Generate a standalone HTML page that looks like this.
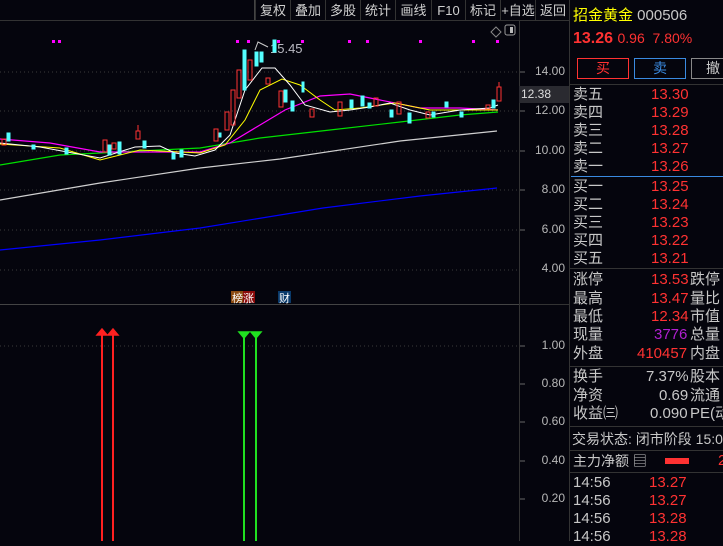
<!DOCTYPE html>
<html><head><meta charset="utf-8"><style>
*{margin:0;padding:0;box-sizing:border-box}
body{width:723px;height:541px;background:#05050d;overflow:hidden;position:relative;font-family:"Liberation Sans","Noto Sans CJK SC",sans-serif;color:#c8c8c8}
.a{position:absolute;white-space:nowrap}
.tb{position:absolute;top:0;height:21px;font-size:13px;line-height:21px;color:#d0d0d0;text-align:center;border-left:1px solid #333}
.ax{position:absolute;right:158px;font-size:12px;color:#b8b8b8;text-align:right}
.p{position:absolute;left:573px;font-size:15px;line-height:18px;white-space:nowrap}
.r{color:#ff3232}
</style></head><body>
<div class="a" style="left:254px;top:0;width:2px;height:21px;background:#444"></div>
<div class="tb" style="left:255px;width:35px">复权</div>
<div class="tb" style="left:290px;width:35px">叠加</div>
<div class="tb" style="left:325px;width:35px">多股</div>
<div class="tb" style="left:360px;width:35px">统计</div>
<div class="tb" style="left:395px;width:36px">画线</div>
<div class="tb" style="left:431px;width:34px">F10</div>
<div class="tb" style="left:465px;width:35px">标记</div>
<div class="tb" style="left:500px;width:35px">+自选</div>
<div class="tb" style="left:535px;width:35px">返回</div>
<div class="a" style="left:0;top:20px;width:569px;height:1px;background:#333"></div>
<div class="a" style="left:519px;top:20px;width:1px;height:521px;background:#333"></div>
<div class="a" style="left:569px;top:0;width:1px;height:541px;background:#333"></div>
<div class="a" style="left:0;top:304px;width:520px;height:1px;background:#444"></div>
<svg class="a" style="left:0;top:0" width="569" height="541">
<g stroke="#3a3a3a" stroke-dasharray="1,3">
<line x1="0" y1="72" x2="520" y2="72"/><line x1="0" y1="111" x2="520" y2="111"/><line x1="0" y1="151" x2="520" y2="151"/><line x1="0" y1="190" x2="520" y2="190"/><line x1="0" y1="230" x2="520" y2="230"/><line x1="0" y1="270" x2="520" y2="270"/><line x1="0" y1="346" x2="520" y2="346"/>
</g>
<g stroke="#666"><line x1="520" y1="72" x2="525" y2="72"/><line x1="520" y1="111" x2="525" y2="111"/><line x1="520" y1="151" x2="525" y2="151"/><line x1="520" y1="190" x2="525" y2="190"/><line x1="520" y1="230" x2="525" y2="230"/><line x1="520" y1="346" x2="525" y2="346"/><line x1="520" y1="384" x2="525" y2="384"/><line x1="520" y1="422" x2="525" y2="422"/><line x1="520" y1="461" x2="525" y2="461"/><line x1="520" y1="499" x2="525" y2="499"/></g>
<g fill="#ff00ff"><rect x="52" y="40" width="3" height="3"/><rect x="58" y="40" width="3" height="3"/><rect x="236" y="40" width="3" height="3"/><rect x="247" y="40" width="3" height="3"/><rect x="277" y="40" width="3" height="3"/><rect x="301" y="40" width="3" height="3"/><rect x="348" y="40" width="3" height="3"/><rect x="366" y="40" width="3" height="3"/><rect x="419" y="40" width="3" height="3"/><rect x="472" y="40" width="3" height="3"/><rect x="496" y="40" width="3" height="3"/></g>
<text x="270" y="53" fill="#b8b8c0" font-size="13" font-family="Liberation Sans">15.45</text>
<polyline points="255,50 258,42 268,47" fill="none" stroke="#ccc"/>
<polyline fill="none" stroke="#0000ff" stroke-width="1.2" points="0,250 100,240 200,228 323,208 420,196 497,188"/>
<polyline fill="none" stroke="#d0d0d0" stroke-width="1.2" points="0,200 100,183 200,168 280,159 400,141 497,131"/>
<polyline fill="none" stroke="#00e000" stroke-width="1.2" points="0,165 60,155 120,152 200,148 260,138 330,130 400,122 460,115 498,112"/>
<polyline fill="none" stroke="#ff00ff" stroke-width="1.2" points="0,139 50,143 100,152 140,152 200,152 230,143 260,125 285,110 320,96 350,94 380,100 420,108 460,108 498,110"/>
<polyline fill="none" stroke="#ffff00" points="0,144 60,148 100,160 140,150 200,153 225,145 245,120 260,90 282,79 300,85 320,100 335,110 360,108 395,103 430,110 498,110"/>
<polyline fill="none" stroke="#ffffff" points="0,143 40,147 100,158 135,147 160,146 175,153 195,156 215,150 230,135 245,90 262,68 275,68 290,85 305,105 330,112 350,110 370,107 390,103 410,110 430,115 460,110 490,108 498,105"/>
<g fill="#54ffff" stroke="#54ffff">
<rect x="7" y="133" width="3" height="8"/><rect x="32" y="145" width="3" height="4"/><rect x="65" y="148" width="3" height="6"/><rect x="108" y="145" width="3" height="10"/><rect x="118" y="142" width="3" height="12"/><rect x="143" y="141" width="3" height="7"/><rect x="172" y="153" width="3" height="6"/><rect x="180" y="150" width="3" height="7"/>
<rect x="219" y="133" width="2" height="4"/><rect x="243" y="50" width="3" height="40"/><rect x="255" y="52" width="3" height="14"/><rect x="260" y="52" width="3" height="10"/><rect x="273" y="40" width="3" height="12"/><rect x="284" y="90" width="3" height="12"/><rect x="291" y="101" width="3" height="10"/><rect x="302" y="82" width="2" height="10"/><rect x="350" y="100" width="3" height="8"/><rect x="361" y="96" width="3" height="10"/><rect x="368" y="103" width="3" height="5"/><rect x="390" y="110" width="3" height="7"/><rect x="408" y="113" width="3" height="10"/><rect x="432" y="112" width="3" height="5"/><rect x="445" y="102" width="3" height="5"/><rect x="460" y="112" width="3" height="5"/><rect x="492" y="100" width="3" height="8"/>
</g>
<g fill="none" stroke="#ff3232">
<rect x="2" y="139" width="4" height="6"/><rect x="103" y="140" width="4" height="12"/><rect x="112" y="143" width="4" height="6"/><rect x="136" y="131" width="4" height="8"/><rect x="214" y="129" width="4" height="12"/><rect x="225" y="112" width="4" height="18"/><rect x="231" y="90" width="4" height="35"/><rect x="237" y="70" width="4" height="28"/><rect x="248" y="60" width="4" height="20"/><rect x="266" y="78" width="4" height="6"/><rect x="279" y="91" width="4" height="16"/><rect x="310" y="109" width="4" height="8"/><rect x="338" y="102" width="4" height="14"/><rect x="374" y="98" width="4" height="8"/><rect x="397" y="102" width="4" height="12"/><rect x="426" y="112" width="4" height="6"/><rect x="486" y="105" width="4" height="4"/><rect x="497" y="87" width="4" height="14"/>
<line x1="499" y1="82" x2="499" y2="87"/><line x1="138" y1="125" x2="138" y2="131"/>
</g>
<path d="M491,32 l5,-5 5,5 -5,5z" fill="none" stroke="#888"/>
<rect x="505" y="25" width="10" height="10" rx="2" fill="none" stroke="#999"/><rect x="510" y="27" width="3" height="6" fill="#bbb"/>
<rect x="231" y="291" width="12" height="12" fill="#8a4a10"/><rect x="243" y="291" width="12" height="12" fill="#8a0a0a"/><rect x="278" y="291" width="13" height="12" fill="#0a3a6a"/>
<text x="232" y="302" fill="#fff" font-size="11" font-family="Noto Sans CJK SC">榜涨</text>
<text x="279" y="302" fill="#fff" font-size="11" font-family="Noto Sans CJK SC">财</text>
<g stroke-width="2"><line x1="102" y1="333" x2="102" y2="541" stroke="#ff2020"/><line x1="113" y1="333" x2="113" y2="541" stroke="#ff2020"/><line x1="244" y1="333" x2="244" y2="541" stroke="#20e020"/><line x1="256" y1="333" x2="256" y2="541" stroke="#20e020"/></g>
<path d="M97,335 l5,-6 5,6z M108,335 l5,-6 5,6z" fill="#ff2020" stroke="#ff2020" stroke-width="1.5"/>
<path d="M239,332 l5,6 5,-6z M251,332 l5,6 5,-6z" fill="#20e020" stroke="#20e020" stroke-width="1.5"/>
</svg>
<div class="a" style="left:519px;top:86px;width:50px;height:17px;background:#2a2a30;color:#ddd;font-size:12px;line-height:17px;padding-left:2px">12.38</div>
<div class="ax" style="top:64px">14.00</div><div class="ax" style="top:103px">12.00</div><div class="ax" style="top:143px">10.00</div><div class="ax" style="top:182px">8.00</div><div class="ax" style="top:222px">6.00</div><div class="ax" style="top:261px">4.00</div>
<div class="ax" style="top:338px">1.00</div><div class="ax" style="top:376px">0.80</div><div class="ax" style="top:414px">0.60</div><div class="ax" style="top:453px">0.40</div><div class="ax" style="top:491px">0.20</div>
<div class="a" style="left:519px;top:304px;width:50px;height:1px;background:#333"></div>
<div class="a" style="left:573px;top:4px;font-size:15px;color:#ffff00">招金黄金 <span style="color:#c8c8c8">000506</span></div>
<div class="a" style="left:573px;top:30px;font-size:16px;color:#ff3232"><b>13.26</b> <span style="font-size:14px">0.96 &nbsp;7.80%</span></div>
<div class="a" style="left:577px;top:58px;width:52px;height:21px;border:1px solid #ff3232;color:#ff3232;font-size:14px;text-align:center;line-height:19px">买</div>
<div class="a" style="left:634px;top:58px;width:52px;height:21px;border:1px solid #3a8ae0;color:#3a8ae0;font-size:14px;text-align:center;line-height:19px">卖</div>
<div class="a" style="left:691px;top:58px;width:40px;height:21px;border:1px solid #888;color:#ccc;font-size:14px;line-height:19px;padding-left:14px">撤</div>
<div class="a" style="left:570px;top:84px;width:153px;height:1px;background:#333"></div>
<div class="p" style="top:86px">卖五</div><div class="p r" style="top:86px;left:651px">13.30</div>
<div class="p" style="top:104px">卖四</div><div class="p r" style="top:104px;left:651px">13.29</div>
<div class="p" style="top:122px">卖三</div><div class="p r" style="top:122px;left:651px">13.28</div>
<div class="p" style="top:140px">卖二</div><div class="p r" style="top:140px;left:651px">13.27</div>
<div class="p" style="top:158px">卖一</div><div class="p r" style="top:158px;left:651px">13.26</div>
<div class="a" style="left:571px;top:176px;width:152px;height:1px;background:#3a8ae0"></div>
<div class="p" style="top:178px">买一</div><div class="p r" style="top:178px;left:651px">13.25</div>
<div class="p" style="top:196px">买二</div><div class="p r" style="top:196px;left:651px">13.24</div>
<div class="p" style="top:214px">买三</div><div class="p r" style="top:214px;left:651px">13.23</div>
<div class="p" style="top:232px">买四</div><div class="p r" style="top:232px;left:651px">13.22</div>
<div class="p" style="top:250px">买五</div><div class="p r" style="top:250px;left:651px">13.21</div>
<div class="a" style="left:570px;top:268px;width:153px;height:1px;background:#333"></div>
<div class="p" style="top:271px">涨停</div><div class="p r" style="top:271px;left:651px">13.53</div><div class="p" style="top:271px;left:690px">跌停</div>
<div class="p" style="top:290px">最高</div><div class="p r" style="top:290px;left:651px">13.47</div><div class="p" style="top:290px;left:690px">量比</div>
<div class="p" style="top:308px">最低</div><div class="p r" style="top:308px;left:651px">12.34</div><div class="p" style="top:308px;left:690px">市值</div>
<div class="p" style="top:326px">现量</div><div class="p" style="top:326px;left:654px;color:#b020d0">3776</div><div class="p" style="top:326px;left:690px">总量</div>
<div class="p" style="top:345px">外盘</div><div class="p r" style="top:345px;left:637px">410457</div><div class="p" style="top:345px;left:690px">内盘</div>
<div class="a" style="left:570px;top:366px;width:153px;height:1px;background:#333"></div>
<div class="p" style="top:368px">换手</div><div class="p" style="top:368px;left:646px">7.37%</div><div class="p" style="top:368px;left:690px">股本</div>
<div class="p" style="top:387px">净资</div><div class="p" style="top:387px;left:659px">0.69</div><div class="p" style="top:387px;left:690px">流通</div>
<div class="p" style="top:405px">收益㈢</div><div class="p" style="top:405px;left:650px">0.090</div><div class="p" style="top:405px;left:690px">PE(动</div>
<div class="a" style="left:570px;top:426px;width:153px;height:1px;background:#333"></div>
<div class="p" style="top:430px;left:572px;font-size:14px">交易状态: 闭市阶段 15:00</div>
<div class="a" style="left:570px;top:450px;width:153px;height:1px;background:#333"></div>
<div class="p" style="top:452px;font-size:14px">主力净额 ▤</div>
<div class="a" style="left:665px;top:458px;width:24px;height:6px;background:#ff3232"></div>
<div class="p r" style="top:452px;left:718px">2</div>
<div class="a" style="left:570px;top:472px;width:153px;height:1px;background:#333"></div>
<div class="p" style="top:474px">14:56</div><div class="p r" style="top:474px;left:649px">13.27</div>
<div class="p" style="top:492px">14:56</div><div class="p r" style="top:492px;left:649px">13.27</div>
<div class="p" style="top:510px">14:56</div><div class="p r" style="top:510px;left:649px">13.28</div>
<div class="p" style="top:528px">14:56</div><div class="p r" style="top:528px;left:649px">13.28</div>
</body></html>
